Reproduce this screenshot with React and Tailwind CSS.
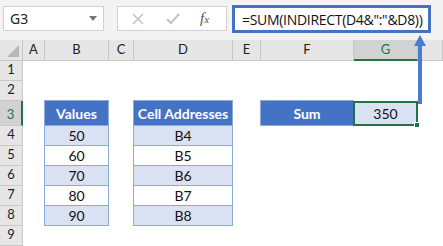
import React from "react";

const cols = ["A", "B", "C", "D", "E", "F", "G", ""];
const values = ["50", "60", "70", "80", "90"];
const addrs = ["B4", "B5", "B6", "B7", "B8"];

function TopBar() {
  return (
    <div className="h-[40px] bg-[#f3f3f3] flex items-start pt-[6px] pl-[3px] gap-[13px]">
      <div className="w-[101px] h-[25px] bg-white border border-[#d0d0d0] flex items-center justify-between pl-[6px] pr-[6px] text-[14px] text-[#222]">
        <span>G3</span>
        <svg width="8" height="5" viewBox="0 0 8 5">
          <polygon points="0,0 8,0 4,5" fill="#777" />
        </svg>
      </div>
      <div className="flex gap-[5px] -mt-[1px]">
        <div className="w-[110px] h-[25px] mt-[1px] bg-white border border-[#d0d0d0] flex items-center text-[#bdbdbd]">
          <svg className="ml-[14px]" width="12" height="12" viewBox="0 0 12 12">
            <path d="M1 1 L11 11 M11 1 L1 11" stroke="#c4c4c4" strokeWidth="1.6" />
          </svg>
          <svg className="ml-[22px]" width="14" height="12" viewBox="0 0 14 12">
            <path d="M1 6 L5 10 L13 1" stroke="#c4c4c4" strokeWidth="2" fill="none" />
          </svg>
          <span className="ml-[20px] italic text-[15px] text-[#555] font-['Liberation_Serif',serif]">
            f<span className="text-[11px]">x</span>
          </span>
        </div>
        <div className="w-[199px] h-[28px] bg-white border-[3px] border-[#4472c4] flex items-center pl-[7px] text-[14px] tracking-[-0.3px] text-[#111] font-['Open_Sans',sans-serif]">
          =SUM(INDIRECT(D4&amp;":"&amp;D8))
        </div>
      </div>
    </div>
  );
}

function Sheet() {
  const cell = "flex items-center justify-center border border-[#8eaadb] -mt-px -ml-px";
  return (
    <div className="grid grid-cols-[23px_22px_64px_25px_99px_28px_93px_64px_1fr] grid-rows-[21px_20px_20px_25px_repeat(6,20px)] font-['Lato',sans-serif] text-[14px] text-[#111]">
      <div className="bg-[#e6e6e6] border-r border-b border-[#c8c8c8] flex items-end justify-end p-[3px]">
        <svg width="12" height="12" viewBox="0 0 12 12">
          <polygon points="12,0 12,12 0,12" fill="#b8b8b8" />
        </svg>
      </div>
      {cols.map((c) => (
        <div
          key={c || "h"}
          className={`flex items-center justify-center border-r border-b text-[13px] ${
            c === "G"
              ? "bg-[#d2d2d2] text-[#217346] border-b-2 border-b-[#217346] border-r-[#c8c8c8]"
              : "bg-[#e6e6e6] text-[#222] border-[#c8c8c8]"
          }`}
        >
          {c}
        </div>
      ))}
      {[1, 2, 3, 4, 5, 6, 7, 8, 9].map((r) => (
        <div
          key={r}
          style={{ gridRow: r + 1 }}
          className={`col-start-1 flex items-end justify-center pb-[1px] text-[13px] border-b ${
            r === 3
              ? "bg-[#d2d2d2] text-[#217346] border-r-2 border-r-[#217346] border-b-[#c8c8c8]"
              : "bg-[#e6e6e6] text-[#222] border-r border-[#c8c8c8]"
          }`}
        >
          {r}
        </div>
      ))}

      <div className={`${cell} col-start-3 row-start-4 bg-[#4472c4] text-white font-bold`}>Values</div>
      <div className={`${cell} col-start-5 row-start-4 bg-[#4472c4] text-white font-bold`}>Cell Addresses</div>
      {values.map((v, i) => (
        <div
          key={v}
          style={{ gridRow: i + 5 }}
          className={`${cell} col-start-3 ${i % 2 === 0 ? "bg-[#d9e1f2]" : "bg-white"}`}
        >
          {v}
        </div>
      ))}
      {addrs.map((v, i) => (
        <div
          key={v}
          style={{ gridRow: i + 5 }}
          className={`${cell} col-start-5 ${i % 2 === 0 ? "bg-[#d9e1f2]" : "bg-white"}`}
        >
          {v}
        </div>
      ))}

      <div className={`${cell} col-start-7 row-start-4 bg-[#4472c4] text-white font-bold`}>Sum</div>
      <div className="relative col-start-8 row-start-4 bg-[#d9e1f2] border-2 border-[#217346] flex items-center justify-center -ml-px">
        350
        <div className="absolute -right-[4px] -bottom-[4px] w-[6px] h-[6px] bg-[#217346] border border-white" />
      </div>
    </div>
  );
}

export default function App() {
  return (
    <div className="relative w-[443px] h-[246px] overflow-hidden bg-white">
      <TopBar />
      <Sheet />
      <svg className="absolute left-0 top-0 pointer-events-none" width="443" height="246">
        <line x1="420" y1="104" x2="420" y2="44" stroke="#4a7bd0" strokeWidth="4" />
        <polygon points="414,46 420,35 426,46" fill="#4a7bd0" />
      </svg>
    </div>
  );
}
